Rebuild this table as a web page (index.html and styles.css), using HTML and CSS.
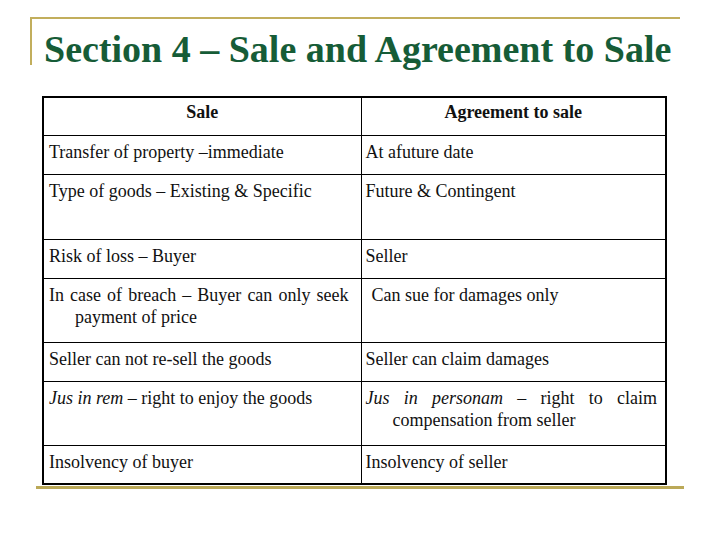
FILE: index.html
```html
<!DOCTYPE html>
<html lang="en">
<head>
<meta charset="utf-8">
<title>Section 4 – Sale and Agreement to Sale</title>
<link rel="stylesheet" href="styles.css">
</head>
<body>
<div class="slide">
  <div class="title-box">
    <h1 class="title">Section 4 – Sale and Agreement to Sale</h1>
  </div>
  <table class="compare">
    <colgroup>
      <col class="col-left">
      <col class="col-right">
    </colgroup>
    <thead>
      <tr class="row-head">
        <th>Sale</th>
        <th>Agreement to sale</th>
      </tr>
    </thead>
    <tbody>
      <tr class="row-short">
        <td>Transfer of property –immediate</td>
        <td>At afuture date</td>
      </tr>
      <tr class="row-tall">
        <td>Type of goods – Existing &amp; Specific</td>
        <td>Future &amp; Contingent</td>
      </tr>
      <tr class="row-short">
        <td>Risk of loss – Buyer</td>
        <td>Seller</td>
      </tr>
      <tr class="row-tall2">
        <td>In case of breach – Buyer can only seek payment of price</td>
        <td class="lead">Can sue for damages only</td>
      </tr>
      <tr class="row-short">
        <td>Seller can not re-sell the goods</td>
        <td>Seller can claim damages</td>
      </tr>
      <tr class="row-tall2">
        <td><em>Jus in rem</em> – right to enjoy the goods</td>
        <td><em>Jus in personam</em> – right to claim compensation from seller</td>
      </tr>
      <tr class="row-short">
        <td>Insolvency of buyer</td>
        <td>Insolvency of seller</td>
      </tr>
    </tbody>
  </table>
  <div class="rule"></div>
</div>
</body>
</html>
```

FILE: styles.css
```css
html, body {
  margin: 0;
  padding: 0;
  background: #ffffff;
}

.slide {
  width: 720px;
  height: 540px;
  padding-top: 17px;
  box-sizing: border-box;
  font-family: "Liberation Serif", "Times New Roman", serif;
  color: #111111;
}

.title-box {
  margin-left: 30px;
  width: 648px;
  height: 46px;
  border-top: 2px solid #c2ae5c;
  border-left: 2px solid #c2ae5c;
}

.title {
  margin: 0;
  padding: 12px 0 0 12px;
  font-family: "Liberation Serif", "Times New Roman", serif;
  font-size: 38px;
  line-height: 36px;
  font-weight: bold;
  color: #165c37;
  white-space: nowrap;
}

.compare {
  margin: 31px 0 0 42px;
  width: 623px;
  border-collapse: collapse;
  border: 2px solid #000000;
  table-layout: fixed;
  font-family: "Liberation Serif", "Times New Roman", serif;
  font-size: 18px;
  line-height: 22px;
}

.col-left { width: 318px; }
.col-right { width: 305px; }

.compare th,
.compare td {
  box-sizing: border-box;
  border: 1px solid #000000;
  vertical-align: top;
  font-family: "Liberation Serif", "Times New Roman", serif;
}

.compare th {
  padding: 3px 6px 0 6px;
  font-weight: bold;
  text-align: center;
}

.compare td {
  padding: 5px 12px 0 31px;
  text-indent: -26px;
  text-align: justify;
  font-weight: normal;
}

.compare td:last-child {
  padding: 5px 8px 0 31px;
  text-indent: -27px;
}

.compare td.lead {
  text-indent: -21px;
}

.row-head { height: 38px; }
.row-short { height: 39px; }
.row-tall { height: 65px; }
.row-tall2 { height: 64px; }

.rule {
  margin: 1px 0 0 36px;
  width: 648px;
  height: 3px;
  background: #bba958;
}
```
